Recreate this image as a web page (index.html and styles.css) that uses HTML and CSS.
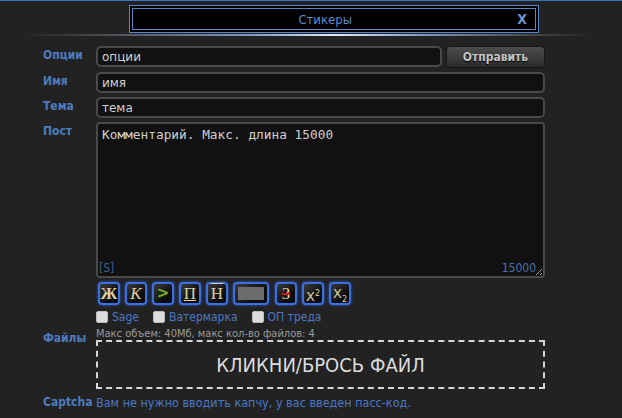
FILE: index.html
```html
<!DOCTYPE html>
<html lang="ru">
  <head>
    <meta charset="UTF-8" />
    <meta name="viewport" content="width=device-width, initial-scale=1.0" />
    <title>Ответ в тред</title>
    <link rel="stylesheet" href="styles.css">
  </head>
  <body>
    <div class="sticker-bar">
      <div class="sticker-bar-inner">
        <span class="sticker-title">Стикеры</span>
        <span class="sticker-close">X</span>
      </div>
    </div>
    <div class="glow-line"></div>

    <form class="post-form">
      <label class="post-label">Опции</label>
      <div class="post-field options-row">
        <input class="post-input" type="text" placeholder="опции" />
        <button class="submit-button" type="button">Отправить</button>
      </div>

      <label class="post-label">Имя</label>
      <div class="post-field">
        <input class="post-input" type="text" placeholder="имя" />
      </div>

      <label class="post-label">Тема</label>
      <div class="post-field">
        <input class="post-input" type="text" placeholder="тема" />
      </div>

      <label class="post-label">Пост</label>
      <div class="post-field">
        <div class="comment-box">
          <textarea class="comment-area" placeholder="Комментарий. Макс. длина 15000"></textarea>
          <span class="comment-spoiler">[S]</span>
          <span class="comment-count">15000</span>
        </div>
        <div class="markup-buttons">
          <button class="markup-button bold" type="button">Ж</button>
          <button class="markup-button italic" type="button">К</button>
          <button class="markup-button quote" type="button">&gt;</button>
          <button class="markup-button under" type="button">П</button>
          <button class="markup-button over" type="button">Н</button>
          <button class="markup-button spoiler" type="button"><span></span></button>
          <button class="markup-button strike" type="button">З</button>
          <button class="markup-button script" type="button">X<sup>2</sup></button>
          <button class="markup-button script" type="button">X<sub>2</sub></button>
        </div>
        <div class="post-checks">
          <label class="post-check"><input type="checkbox" /> Sage</label>
          <label class="post-check"><input type="checkbox" /> Ватермарка</label>
          <label class="post-check"><input type="checkbox" /> ОП треда</label>
        </div>
      </div>

      <label class="post-label files-label">Файлы</label>
      <div class="post-field files-field">
        <div class="files-info">Макс объем: 40Мб, макс кол-во файлов: 4</div>
        <div class="drop-zone">КЛИКНИ/БРОСЬ ФАЙЛ</div>
      </div>

      <label class="post-label">Captcha</label>
      <div class="post-field captcha-text">Вам не нужно вводить капчу, у вас введен пасс-код.</div>
    </form>
  </body>
</html>
```

FILE: styles.css
```css
body {
  background-color: #222222;
  margin: 0px;
  border-top: 1px solid #3a74c4;
  font-family: 'DejaVu Sans', Verdana, sans-serif;
  font-stretch: condensed;
  color: #cccccc;
}

.sticker-bar {
  margin: 4px 0px 0px 129px;
  width: 410px;
  box-sizing: border-box;
  border: 1px solid #5b86c5;
  padding: 2px;
  background-color: #000000;
}

.sticker-bar-inner {
  border: 1px solid #5b86c5;
  height: 20px;
  display: flex;
  align-items: center;
  padding: 0px 8px 0px 0px;
}

.sticker-title {
  flex: 1;
  text-align: center;
  font-size: 13px;
  color: #5b8ad0;
}

.sticker-close {
  font-size: 14px;
  font-weight: bold;
  color: #6f93cf;
}

.glow-line {
  margin: 1px 0px 0px 22px;
  width: 570px;
  height: 2px;
  background: linear-gradient(
    to right,
    rgba(80, 80, 80, 0),
    #4a4f56 15%,
    #7e9ac0 40%,
    #dfeaff 55%,
    #7e9ac0 70%,
    #4a4f56 88%,
    rgba(80, 80, 80, 0)
  );
}

.post-form {
  margin-top: 10px;
  padding-left: 43px;
  display: grid;
  grid-template-columns: 53px 449px;
  row-gap: 4px;
}

.post-label {
  font-size: 12px;
  font-weight: bold;
  line-height: 15px;
  padding-top: 2px;
  color: #4d7cbf;
}

.options-row {
  display: flex;
  gap: 4px;
}

.post-input {
  display: block;
  width: 100%;
  height: 21px;
  box-sizing: border-box;
  border: 2px solid #4a4a4a;
  border-radius: 5px;
  background-color: #111111;
  padding: 0px 4px;
  font-family: 'DejaVu Sans', sans-serif;
  font-size: 12px;
  color: #d0d0d0;
  outline: none;
}

.post-input::placeholder,
.comment-area::placeholder {
  color: #d0d0d0;
  opacity: 1;
}

.submit-button {
  flex: none;
  width: 99px;
  height: 22px;
  border: 1px solid #161616;
  border-radius: 4px;
  background: linear-gradient(#4c4c4c, #2b2b2b);
  color: #c4c4c4;
  font-family: 'DejaVu Sans', sans-serif;
  font-stretch: condensed;
  font-size: 12px;
  font-weight: bold;
  text-shadow: 0px 1px 1px #000000;
  cursor: pointer;
}

.comment-box {
  position: relative;
}

.comment-area {
  display: block;
  width: 100%;
  height: 156px;
  box-sizing: border-box;
  border: 2px solid #4a4a4a;
  border-radius: 4px;
  background-color: #111111;
  padding: 3px 4px;
  font-family: 'DejaVu Sans Mono', monospace;
  font-size: 12.8px;
  color: #d0d0d0;
  outline: none;
}

.comment-spoiler,
.comment-count {
  position: absolute;
  bottom: 3px;
  font-size: 12px;
  color: #3d5f8f;
}

.comment-spoiler {
  left: 3px;
}

.comment-count {
  right: 9px;
  color: #4a70a8;
}

.markup-buttons {
  display: flex;
  gap: 5px;
  margin: 4px 0px 0px 2px;
}

.markup-button {
  width: 22px;
  height: 23px;
  padding: 0px;
  border: 2px solid #3c6fe0;
  border-radius: 4px;
  box-shadow: 0px 0px 3px #2c5fd8;
  background: linear-gradient(135deg, #3a3a3a, #0c0c0c 70%);
  color: #ddd0a4;
  font-family: 'Liberation Serif', serif;
  font-size: 17px;
  line-height: 19px;
  cursor: pointer;
}

.markup-button.bold {
  font-weight: bold;
}

.markup-button.italic {
  font-style: italic;
}

.markup-button.quote {
  font-family: 'DejaVu Sans', sans-serif;
  font-size: 15px;
  font-weight: bold;
  color: #76a828;
}

.markup-button.under {
  text-decoration: underline;
}

.markup-button.over {
  text-decoration: overline;
}

.markup-button.spoiler {
  width: 36px;
  display: grid;
  place-items: center;
}

.markup-button.spoiler > span {
  width: 26px;
  height: 13px;
  background-color: #6c6c6c;
}

.markup-button.strike {
  margin-left: 1px;
  text-decoration: line-through;
  text-decoration-color: #e01010;
  text-decoration-thickness: 2px;
}

.markup-button.script {
  font-family: 'DejaVu Sans', sans-serif;
  font-size: 13px;
}

.markup-button sup,
.markup-button sub {
  font-size: 8px;
}

.post-checks {
  display: flex;
  gap: 14px;
  margin: 5px 0px 0px 0px;
}

.post-check {
  display: flex;
  align-items: center;
  gap: 4px;
  font-size: 12px;
  color: #4a78c8;
}

.post-check > input {
  appearance: none;
  margin: 0px;
  width: 12px;
  height: 12px;
  border: 1px solid #bdbdbd;
  border-radius: 2px;
  background-color: #dcdcdc;
}

.files-label {
  padding-top: 3px;
}

.files-info {
  font-size: 11px;
  color: #9a9a9a;
  line-height: 12px;
}

.drop-zone {
  height: 49px;
  box-sizing: border-box;
  border: 2px dashed #d6d6d6;
  display: grid;
  place-items: center;
  font-size: 20px;
  color: #dddddd;
}

.captcha-text {
  font-size: 12.5px;
  line-height: 15px;
  padding-top: 2px;
  color: #4a78c8;
}
```
